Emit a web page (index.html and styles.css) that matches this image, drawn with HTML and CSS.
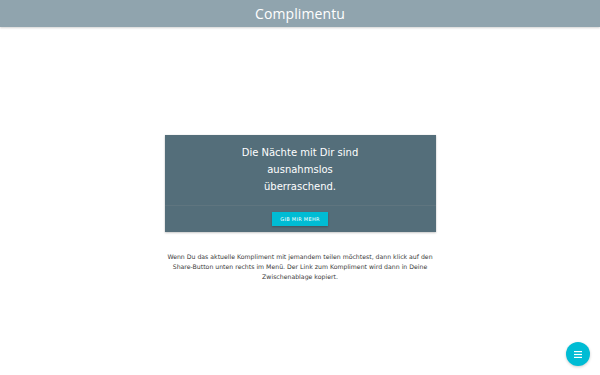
FILE: index.html
```html
<!DOCTYPE html>
<html lang="de">
<head>
<meta charset="utf-8">
<title>Complimentu</title>
<link rel="stylesheet" href="styles.css">
</head>
<body>
<header class="topbar">
  <h1 class="brand">Complimentu</h1>
</header>
<main class="main">
  <section class="card">
    <div class="card-content">
      <p class="compliment">Die Nächte mit Dir sind ausnahmslos überraschend.</p>
    </div>
    <div class="card-action">
      <button class="btn">GIB MIR MEHR</button>
    </div>
  </section>
  <p class="hint">Wenn Du das aktuelle Kompliment mit jemandem teilen möchtest, dann klick auf den Share-Button unten rechts im Menü. Der Link zum Kompliment wird dann in Deine Zwischenablage kopiert.</p>
</main>
<button class="fab" aria-label="Menü">
  <svg width="8" height="7" viewBox="0 0 8 7"><rect x="0" y="0" width="8" height="1.2" fill="#fff"/><rect x="0" y="2.9" width="8" height="1.2" fill="#fff"/><rect x="0" y="5.8" width="8" height="1.2" fill="#fff"/></svg>
</button>
</body>
</html>
```
FILE: styles.css
```css
html, body { margin: 0; padding: 0; }
body {
  width: 600px;
  height: 375px;
  overflow: hidden;
  background: #fff;
  font-family: "DejaVu Sans", sans-serif;
  position: relative;
}
.topbar {
  height: 27px;
  background: #90a4ae;
  box-shadow: 0 1px 2px rgba(0,0,0,0.18);
  display: flex;
  align-items: center;
  justify-content: center;
}
.brand {
  margin: 0;
  color: #fff;
  font-family: "Open Sans", sans-serif;
  font-weight: 400;
  font-size: 14px;
  letter-spacing: 0.1px;
}
.main {
  display: flex;
  flex-direction: column;
  align-items: center;
  padding-top: 108px;
}
.card {
  width: 271px;
  background: #546e7a;
  box-shadow: 0 1px 2px rgba(0,0,0,0.2), 0 0 1px rgba(0,0,0,0.15);
  display: flex;
  flex-direction: column;
}
.card-content {
  display: flex;
  justify-content: center;
  padding: 9px 0 10px;
}
.compliment {
  margin: 0;
  width: 122px;
  text-align: center;
  color: #fff;
  font-size: 10px;
  line-height: 17px;
}
.card-action {
  border-top: 1px solid rgba(160,160,160,0.15);
  display: flex;
  justify-content: center;
  padding: 6px 0 6px;
}
.btn {
  width: 56px;
  height: 14px;
  padding: 0;
  border: none;
  background: #00bcd4;
  color: #fff;
  font-family: "DejaVu Sans", sans-serif;
  font-size: 5px;
  letter-spacing: 0.3px;
  box-shadow: 0 1px 2px rgba(0,0,0,0.25);
}
.hint {
  margin: 20px 0 0;
  width: 275px;
  text-align: center;
  font-size: 6.2px;
  line-height: 10px;
  color: #3a3a3a;
}
.fab {
  position: absolute;
  left: 566px;
  top: 342px;
  width: 24px;
  height: 24px;
  border-radius: 50%;
  border: none;
  padding: 0;
  background: #00bcd4;
  display: flex;
  align-items: center;
  justify-content: center;
  box-shadow: 0 1px 3px rgba(0,0,0,0.2);
}
```
